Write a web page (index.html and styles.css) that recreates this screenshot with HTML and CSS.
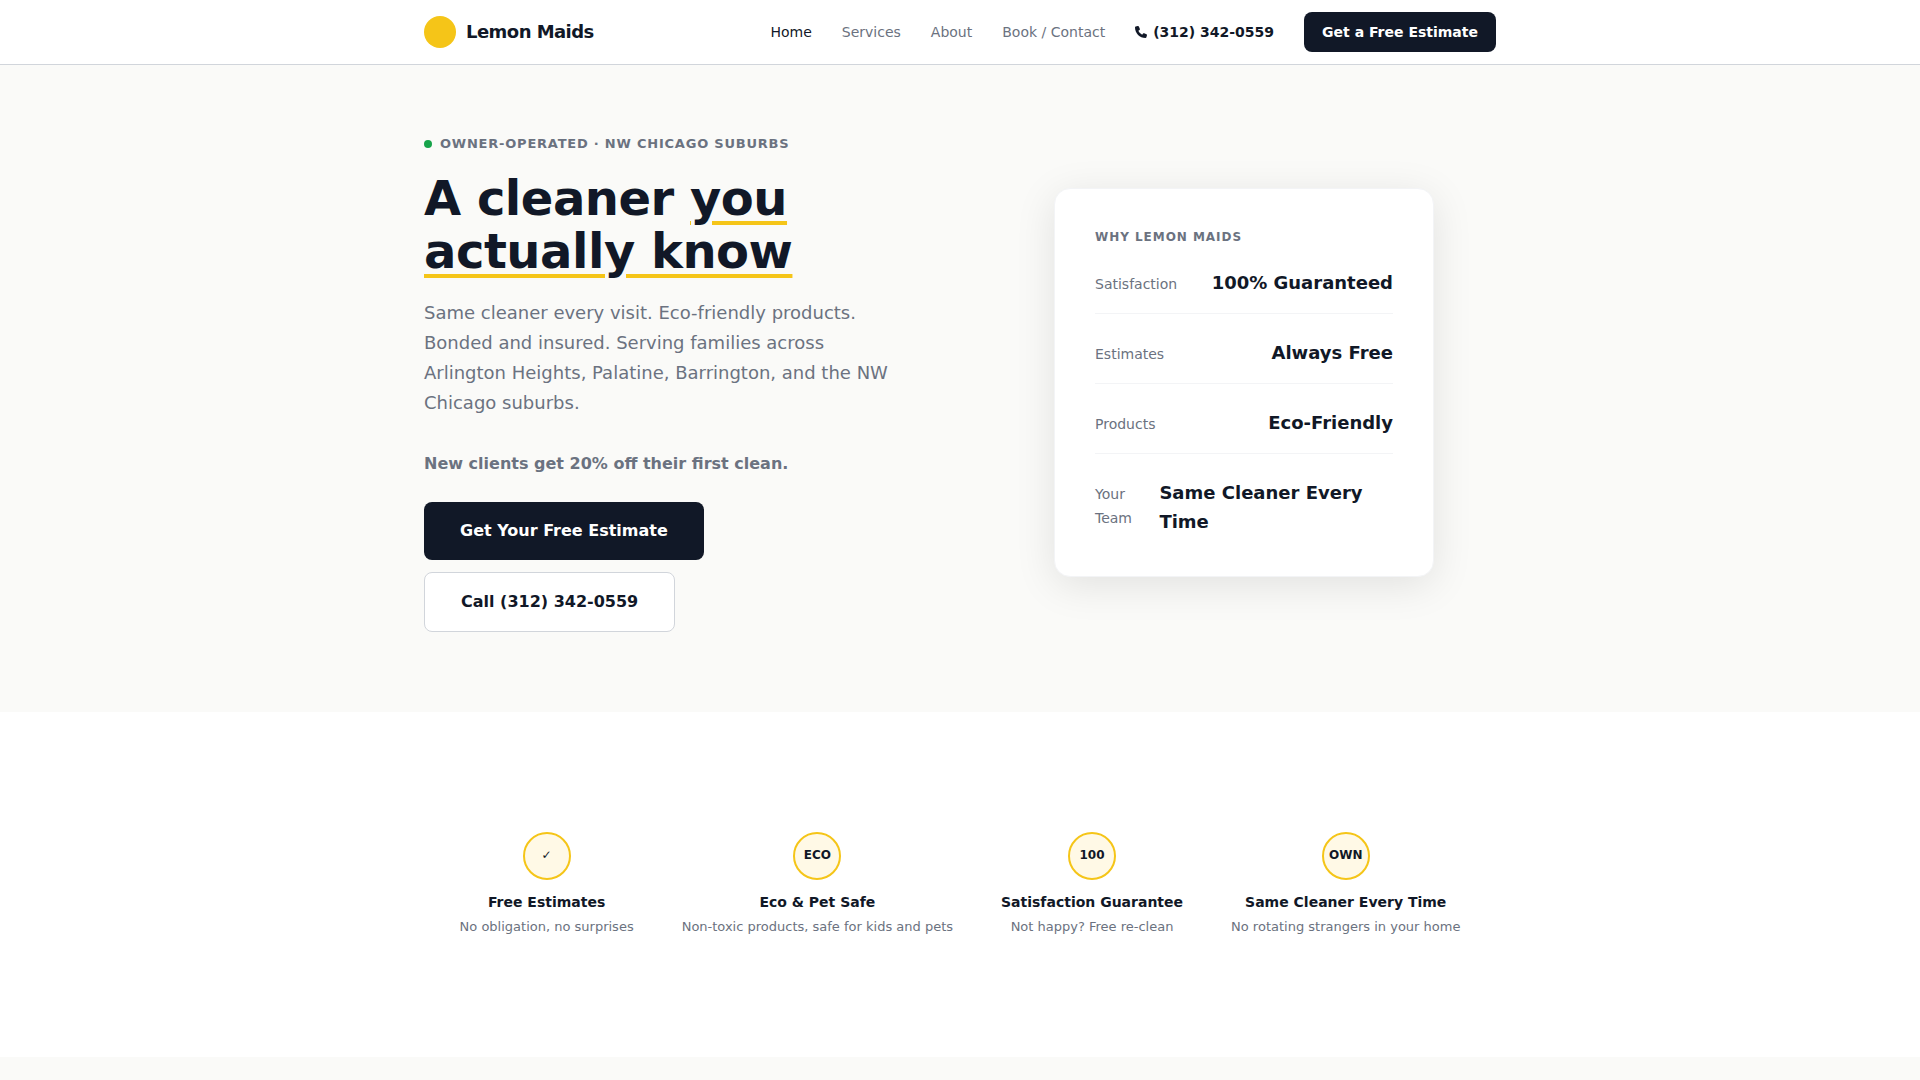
FILE: index.html
```html
<!DOCTYPE html>
<html lang="en">
<head>
  <meta charset="UTF-8">
  <meta name="viewport" content="width=device-width, initial-scale=1.0">
  <title>Lemon Maids | House Cleaning in the NW Chicago Suburbs</title>
  <link rel="stylesheet" href="styles.css">
</head>
<body>

  <header class="site-header">
    <div class="container header-inner">
      <a class="brand" href="#"><span class="brand-mark"></span>Lemon Maids</a>
      <nav class="nav">
        <a class="active" href="#">Home</a>
        <a href="#services">Services</a>
        <a href="#about">About</a>
        <a href="#contact">Book / Contact</a>
        <a class="nav-phone" href="tel:+13123420559">
          <svg class="phone-icon" viewBox="0 0 512 512" aria-hidden="true"><path fill="currentColor" d="M164.900 24.600c-7.700-18.600-28-28.500-47.400-23.200l-88 24C12.100 30.200 0 46 0 64c0 247.400 200.600 448 448 448 18 0 33.800-12.100 38.600-29.500l24-88c5.300-19.400-4.600-39.700-23.200-47.400l-96-40c-16.300-6.800-35.200-2.100-46.300 11.600L304.700 368C234.300 334.700 177.300 277.700 144 207.300l49.300-40.300c13.700-11.200 18.400-30 11.600-46.300l-40-96z"/></svg>
          (312) 342-0559
        </a>
        <a class="btn btn-small" href="#contact">Get a Free Estimate</a>
      </nav>
    </div>
  </header>

  <main>
    <section class="hero">
      <div class="container hero-grid">
        <div class="hero-copy">
          <p class="eyebrow"><span class="dot"></span>Owner-Operated · NW Chicago Suburbs</p>
          <h1>A cleaner <span class="highlight">you actually know</span></h1>
          <p class="lead">Same cleaner every visit. Eco-friendly products. Bonded and insured. Serving families across Arlington Heights, Palatine, Barrington, and the NW Chicago suburbs.</p>
          <p class="promo">New clients get 20% off their first clean.</p>
          <div class="hero-actions">
            <a class="btn" href="#contact">Get Your Free Estimate</a>
            <a class="btn btn-outline" href="tel:+13123420559">Call (312) 342-0559</a>
          </div>
        </div>

        <aside class="card">
          <h2>Why Lemon Maids</h2>
          <div class="stats">
            <div class="stat"><span class="label">Satisfaction</span><span class="value">100% Guaranteed</span></div>
            <div class="stat"><span class="label">Estimates</span><span class="value">Always Free</span></div>
            <div class="stat"><span class="label">Products</span><span class="value">Eco-Friendly</span></div>
            <div class="stat"><span class="label">Your Team</span><span class="value">Same Cleaner Every Time</span></div>
          </div>
        </aside>
      </div>
    </section>

    <section class="trust">
      <div class="container trust-list">
        <div class="trust-item">
          <div class="badge">✓</div>
          <h3>Free Estimates</h3>
          <p>No obligation, no surprises</p>
        </div>
        <div class="trust-item">
          <div class="badge">ECO</div>
          <h3>Eco &amp; Pet Safe</h3>
          <p>Non-toxic products, safe for kids and pets</p>
        </div>
        <div class="trust-item">
          <div class="badge">100</div>
          <h3>Satisfaction Guarantee</h3>
          <p>Not happy? Free re-clean</p>
        </div>
        <div class="trust-item">
          <div class="badge">OWN</div>
          <h3>Same Cleaner Every Time</h3>
          <p>No rotating strangers in your home</p>
        </div>
      </div>
    </section>
  </main>

</body>
</html>
```
FILE: styles.css
```css
* {
  box-sizing: border-box;
  margin: 0;
  padding: 0;
}
body {
  font-family: "DejaVu Sans", sans-serif;
  font-size: 16px;
  line-height: 1.65;
  color: #111827;
  background-color: #fafaf8;
}
a {
  color: inherit;
  text-decoration: none;
}
.container {
  max-width: 1120px;
  margin: 0 auto;
  padding: 0 24px;
}

/* Header */
.site-header {
  background-color: #fff;
  border-bottom: 1px solid #d1d5db;
}
.header-inner {
  display: flex;
  align-items: center;
  justify-content: space-between;
  min-height: 64px;
}
.brand {
  display: flex;
  align-items: center;
  gap: 10px;
  font-size: 18px;
  font-weight: 700;
  line-height: 28px;
  letter-spacing: -0.03em;
}
.brand-mark {
  width: 32px;
  height: 32px;
  border-radius: 50%;
  background-color: #f5c518;
}
.nav {
  display: flex;
  align-items: center;
  gap: 30px;
  font-size: 14px;
  line-height: 22px;
  color: #6b7280;
}
.nav .active {
  color: #111827;
}
.nav-phone {
  display: flex;
  align-items: center;
  gap: 6px;
  font-weight: 700;
  color: #111827;
}
.phone-icon {
  width: 12px;
  height: 12px;
}

/* Buttons */
.btn {
  padding: 16px 36px;
  border-radius: 8px;
  font-size: 16px;
  font-weight: 700;
  line-height: 26px;
  color: #fff;
  background-color: #111827;
}
.btn-small {
  padding: 9px 18px;
  font-size: 14px;
  line-height: 22px;
}
.btn-outline {
  color: #111827;
  background-color: #fff;
  border: 1px solid #d1d5db;
}

/* Hero */
.hero {
  padding: 67px 0 80px;
}
.hero-grid {
  display: grid;
  grid-template-columns: 1fr 1fr;
  gap: 64px;
  align-items: center;
}
.eyebrow {
  display: flex;
  align-items: center;
  gap: 8px;
  margin-bottom: 16px;
  font-size: 13px;
  font-weight: 700;
  line-height: 24px;
  letter-spacing: 0.06em;
  text-transform: uppercase;
  color: #6b7280;
}
.dot {
  width: 8px;
  height: 8px;
  border-radius: 50%;
  background-color: #16a34a;
}
h1 {
  margin-bottom: 20px;
  font-size: 48px;
  font-weight: 700;
  line-height: 53px;
  letter-spacing: -0.01em;
}
.highlight {
  text-decoration: underline;
  text-decoration-color: #f5c518;
  text-decoration-thickness: 4px;
  text-underline-offset: 6px;
}
.lead {
  max-width: 470px;
  margin-bottom: 32px;
  font-size: 18px;
  line-height: 30px;
  color: #6b7280;
}
.promo {
  margin-bottom: 24px;
  font-weight: 700;
  line-height: 28px;
  color: #6b7280;
}
.hero-actions {
  display: flex;
  flex-wrap: wrap;
  gap: 12px;
}

/* Why card */
.card {
  justify-self: center;
  width: 100%;
  max-width: 380px;
  padding: 40px;
  background-color: #fff;
  border: 1px solid #f3f4f6;
  border-radius: 16px;
  box-shadow: 0 8px 40px rgba(0, 0, 0, 0.1);
}
.card h2 {
  margin-bottom: 22px;
  font-size: 12px;
  line-height: 17px;
  letter-spacing: 0.08em;
  text-transform: uppercase;
  color: #6b7280;
}
.stats {
  display: flex;
  flex-direction: column;
  gap: 24px;
}
.stat {
  display: flex;
  align-items: baseline;
  justify-content: space-between;
  padding-bottom: 16px;
  border-bottom: 1px solid #f3f4f6;
}
.stat:last-child {
  padding-bottom: 0;
  border-bottom: none;
}
.label {
  font-size: 14px;
  line-height: 24px;
  color: #6b7280;
}
.value {
  font-size: 18px;
  font-weight: 700;
  line-height: 29px;
}

/* Trust row */
.trust {
  padding: 120px 0;
  background-color: #fff;
}
.trust-list {
  display: flex;
  flex-wrap: wrap;
  justify-content: center;
  gap: 48px;
}
.trust-item {
  display: flex;
  flex-direction: column;
  align-items: center;
  text-align: center;
}
.badge {
  display: flex;
  align-items: center;
  justify-content: center;
  width: 48px;
  height: 48px;
  margin-bottom: 10px;
  border: 2px solid #f5c518;
  border-radius: 50%;
  background-color: #fff9e6;
  font-size: 12px;
  font-weight: 700;
}
.trust-item h3 {
  margin-bottom: 2px;
  font-size: 14px;
  line-height: 24px;
}
.trust-item p {
  font-size: 13px;
  line-height: 21px;
  color: #6b7280;
}
```
